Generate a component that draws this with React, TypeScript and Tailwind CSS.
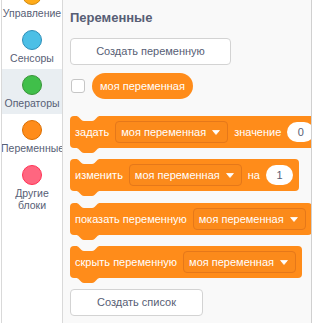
import type { ReactNode } from 'react'

const font = { fontFamily: '"Liberation Sans", Arial, sans-serif' }

const categories = [
  { name: 'Управление', fill: 'bg-[#ffab19]', ring: 'border-[#cf8b17]' },
  { name: 'Сенсоры', fill: 'bg-[#4cbfe6]', ring: 'border-[#2e8eb8]' },
  { name: 'Операторы', fill: 'bg-[#40bf4a]', ring: 'border-[#389438]', active: true },
  { name: 'Переменные', fill: 'bg-[#ff8c1a]', ring: 'border-[#db6e00]' },
  { name: 'Другие блоки', fill: 'bg-[#ff6680]', ring: 'border-[#ff3355]' },
]

function Notch({ className, fill }: { className: string; fill: string }) {
  return (
    <svg className={className} width="24" height="5" viewBox="0 0 24 5">
      <path
        d="M0 0 C1.5 0 2 0.5 3 1.5 L5.5 4 C6.3 4.7 7 5 8 5 H16 C17 5 17.7 4.7 18.5 4 L21 1.5 C22 0.5 22.5 0 24 0 Z"
        fill={fill}
      />
    </svg>
  )
}

function Block({ children, className = '' }: { children: ReactNode; className?: string }) {
  return (
    <div className={`relative w-fit shrink-0 ${className}`}>
      <div className="flex h-[32px] items-center gap-[6px] whitespace-nowrap rounded-[4px] bg-[#ff8c1a] pl-[5px] pr-[6px] text-[11px] text-white">
        {children}
      </div>
      <Notch className="absolute left-[6px] top-0" fill="#f9f9f9" />
      <Notch className="absolute left-[6px] top-full" fill="#ff8c1a" />
    </div>
  )
}

function VarDropdown() {
  return (
    <div className="flex h-[22px] items-center gap-[6px] rounded-[4px] border border-[#e5781a] bg-[#fb8a1b] pl-[5px] pr-[7px]">
      <span>моя переменная</span>
      <svg width="8" height="5" viewBox="0 0 8 5">
        <path d="M0.6 0.5 H7.4 L4 4.5 Z" fill="#fff" stroke="#fff" strokeWidth="0.8" strokeLinejoin="round" />
      </svg>
    </div>
  )
}

function Oval({ value }: { value: string }) {
  return (
    <div className="flex h-[20px] min-w-[27px] items-center justify-center rounded-full bg-white px-[8px] text-[#575e75]">
      {value}
    </div>
  )
}

function FlyoutButton({ label, className }: { label: string; className: string }) {
  return (
    <div
      className={`flex h-[27px] items-center justify-center rounded-[4px] border border-[#d3d3d3] bg-white text-[11px] text-[#575e75] ${className}`}
    >
      {label}
    </div>
  )
}

export default function App() {
  return (
    <div className="flex h-[323px] w-[315px] overflow-hidden bg-white" style={font}>
      <div className="ml-px flex w-[62px] shrink-0 flex-col overflow-hidden border-x border-[#d9d9d9] bg-white">
        <div className="-mt-[21px] flex flex-col">
          {categories.map((c) => (
            <div
              key={c.name}
              className={`flex h-[45px] flex-col items-center pt-[6px] ${c.active ? 'bg-[#e9eef2]' : ''}`}
            >
              <div className={`h-[20px] w-[20px] shrink-0 rounded-full border ${c.fill} ${c.ring}`} />
              <div className="mt-[2px] w-[62px] text-center text-[10.5px] leading-[12px] text-[#575e75]">
                {c.name === 'Переменные' ? <span className="whitespace-nowrap">{c.name}</span> : c.name}
              </div>
            </div>
          ))}
        </div>
      </div>

      <div className="flex w-[249px] shrink-0 flex-col overflow-hidden border-r border-[#d0d0d0] bg-[#f9f9f9] pl-[7px] pt-[10px]">
        <div className="text-[13px] font-bold leading-[16px] text-[#575e75]">Переменные</div>

        <FlyoutButton label="Создать переменную" className="mt-[12px] w-[161px]" />

        <div className="mt-[8px] flex items-center gap-[7px]">
          <div className="ml-px h-[14px] w-[14px] rounded-[3px] border border-[#c6c6c6] bg-white" />
          <div className="flex h-[26px] items-center rounded-full bg-[#ff8c1a] px-[8px] text-[11px] text-white">
            моя переменная
          </div>
        </div>

        <Block className="mt-[17px]">
          <span>задать</span>
          <VarDropdown />
          <span>значение</span>
          <Oval value="0" />
        </Block>

        <Block className="mt-[11px]">
          <span>изменить</span>
          <VarDropdown />
          <span>на</span>
          <Oval value="1" />
        </Block>

        <Block className="mt-[12px]">
          <span>показать переменную</span>
          <VarDropdown />
        </Block>

        <Block className="mt-[11px]">
          <span>скрыть переменную</span>
          <VarDropdown />
        </Block>

        <FlyoutButton label="Создать список" className="mt-[11px] w-[133px]" />
      </div>
      <div className="flex-1 bg-white" />
    </div>
  )
}
